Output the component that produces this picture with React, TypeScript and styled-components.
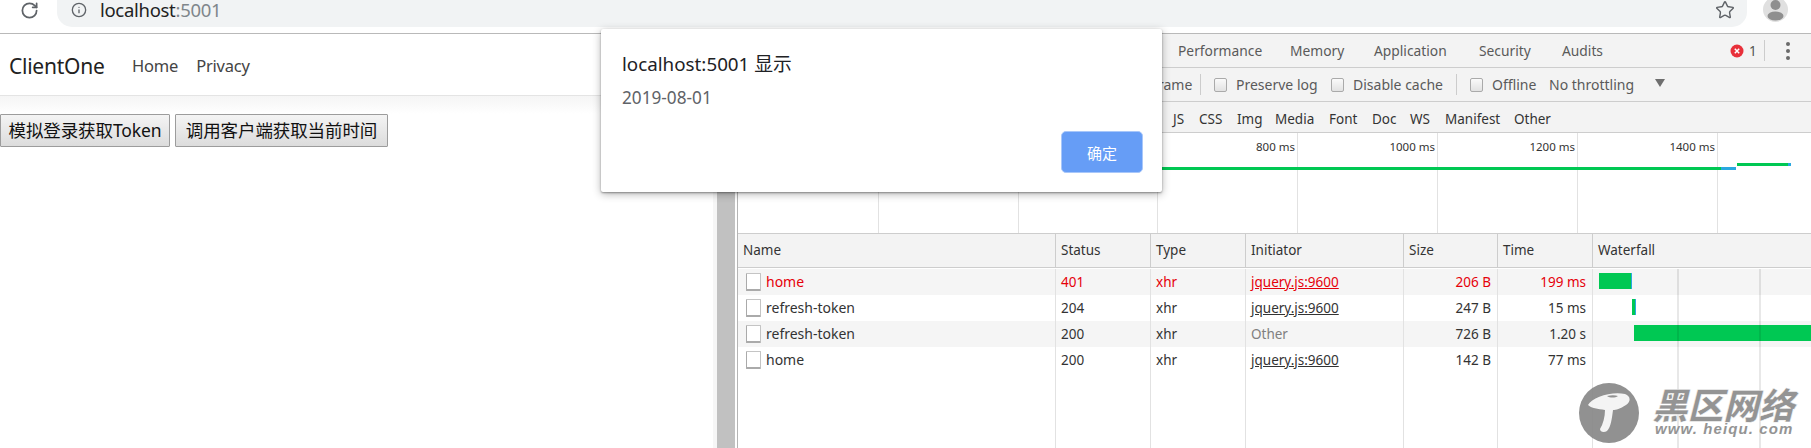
import React from "react";
import styled, { createGlobalStyle } from "styled-components";
import { RotateCw, Info, Star } from "lucide-react";

const Global = createGlobalStyle`
  html, body { margin: 0; padding: 0; background: #fff; overflow: hidden; }
  #root { width: 1811px; height: 448px; }
  * { box-sizing: border-box; }
`;
const UI = `"Noto Sans", "Noto Sans CJK SC", sans-serif`;

const Screen = styled.div`
  position: relative; width: 1811px; height: 448px; overflow: hidden; display: flex; flex-direction: column;
  font-family: ${UI}; background: #fff;
`;
const BrowserBar = styled.header`
  height: 34px; flex: none; display: flex; align-items: flex-start; border-bottom: 1px solid #b9b9b9; background: #fff;
`;
const Reload = styled.div`
  width: 57px; height: 27px; flex: none; padding: 1px 0 0 20px; color: #5f6368; display: flex;
`;
const Omnibox = styled.div`
  width: 1690px; height: 27px; flex: none; background: #f1f3f4; border-radius: 0 0 15px 15px;
  display: flex; align-items: center; padding: 0 12px 7px 14px; color: #5f6368;
`;
const Url = styled.span`
  margin-left: 13px; font-size: 18.5px; line-height: 18px; color: #222; flex: 1; letter-spacing: -0.3px;
  & > span { color: #80868b; }
`;
const Avatar = styled.div`
  margin: -3px 0 0 16px; width: 25px; height: 25px; flex: none; border-radius: 50%; background: #e0e0e0; overflow: hidden;
`;
const Main = styled.div`display: flex; flex: 1; min-height: 0;`;
const Page = styled.section`width: 713px; flex: none; display: flex; flex-direction: column; background: #fff;`;
const Navbar = styled.nav`
  height: 62px; flex: none; border-bottom: 1px solid #e4e4e4; display: flex; align-items: center; padding: 2px 0 0 9px; color: #333;
`;
const Brand = styled.span`font-size: 21px; margin-right: 27px; width: 96px; color: #222; letter-spacing: -0.25px; white-space: nowrap;`;
const NavLink = styled.span`font-size: 16.5px; margin-right: 18px; color: #444; letter-spacing: -0.2px;`;
const PageBody = styled.div`
  flex: 1; padding-top: 18px; display: flex; align-items: flex-start; gap: 5px;
  background: linear-gradient(#f5f5f5, #fff 18px);
`;
const PlainButton = styled.button<{ $w: number }>`
  width: ${p => p.$w}px; height: 33px; padding: 0; border: 1px solid #9c9c9c; border-radius: 1px; font-family: ${UI}; font-size: 17.5px; line-height: 1;
  color: #111; background: linear-gradient(#f4f4f4, #dcdcdc); white-space: nowrap; letter-spacing: -0.1px;
`;
const Scrollbar = styled.div`
  width: 24px; flex: none; border-left: 4px solid #f6f6f6; border-right: 2px solid #fff; background: #c1c1c1;
`;
const Devtools = styled.section`
  flex: 1; min-width: 0; display: flex; flex-direction: column; border-left: 1px solid #b5b5b5; font-size: 13.5px; color: #333;
`;
const ToolRow = styled.div<{ $h: number; $pad: number; $top?: number }>`
  height: ${p => p.$h}px; flex: none; background: #f3f3f3; border-bottom: 1px solid #cdcdcd;
  display: flex; align-items: center; padding: ${p => p.$top ?? 0}px 0 0 ${p => p.$pad}px; white-space: nowrap;
`;
const Tab = styled.span<{ $w: number }>`width: ${p => p.$w}px; flex: none; color: #5a5a5a; font-size: 13.8px;`;
const ErrorWrap = styled.span`
  margin-left: 126px; display: flex; align-items: center; gap: 5px; color: #555; width: 34px;
`;
const VDivider = styled.span<{ $gap?: number }>`
  width: 1px; height: 21px; background: #ccc; flex: none; margin: 0 ${p => p.$gap ?? 13}px;
`;
const Dots = styled.span`margin-left: 15px; display: flex;`;
const Check = styled.span`
  width: 13px; height: 14px; flex: none; border: 1px solid #aaa; border-radius: 2px; background: linear-gradient(#fafafa, #e2e2e2); margin-right: 9px;
`;
const OptLabel = styled.span<{ $w: number }>`width: ${p => p.$w}px; flex: none; color: #5a5a5a; font-size: 14px;`;
const HiddenLabel = styled(OptLabel)`text-align: right;`;
const DropTriangle = styled.span`
  width: 0; height: 0; border-left: 5px solid transparent; border-right: 5px solid transparent; border-top: 8px solid #6e6e6e; margin: -4px 0 0 21px;
`;
const Filter = styled.span<{ $w: number }>`width: ${p => p.$w}px; flex: none; color: #333;`;
const Timeline = styled.div`height: 101px; flex: none; background: #fff; border-bottom: 1px solid #cdcdcd;`;
const Table = styled.div`flex: 1; min-height: 0; display: flex; flex-direction: column; background: #fff;`;
const cols = "318px 95px 95px 158px 94px 95px 1fr";
const HeaderRow = styled.div`
  height: 34px; flex: none; display: grid; grid-template-columns: ${cols}; background: #f3f3f3; border-bottom: 1px solid #cdcdcd; margin-bottom: 1px;
`;
const HeaderCell = styled.div`
  display: flex; align-items: center; padding: 0 0 1px 5px; border-right: 1px solid #cdcdcd; color: #333; &:last-child { border-right: none; }
`;
const Row = styled.div<{ $alt?: boolean; $err?: boolean }>`
  height: 26px; flex: none; display: grid; grid-template-columns: ${cols};
  background: ${p => (p.$alt ? "#f5f5f5" : "#fff")}; color: ${p => (p.$err ? "#e6000a" : "#333")};
`;
const Cell = styled.div<{ $right?: boolean }>`
  display: flex; align-items: center; padding: 0 ${p => (p.$right ? 6 : 5)}px 1px; border-right: 1px solid #e2e2e2; white-space: nowrap; overflow: hidden;
  justify-content: ${p => (p.$right ? "flex-end" : "flex-start")};
`;
const NameCell = styled(Cell)`padding-left: 8px; gap: 5px; font-size: 14px;`;
const FileIcon = styled.span`
  width: 15px; height: 18px; flex: none; background: #fff; border: 1px solid #c4c4c4; border-left-color: #aaa; border-bottom: 2px solid #aaa; border-radius: 1px;
`;
const Link = styled.span`text-decoration: underline;`;
const Muted = styled.span`color: #808080;`;
const WaterfallCell = styled.div`
  position: relative; overflow: hidden; border-left: 1px solid transparent; height: 100%;
  &::before, &::after { content: ""; position: absolute; top: 0; bottom: 0; width: 2px; background: rgba(0,0,0,0.09); z-index: 1; }
  &::before { left: 83px; }
  &::after { left: 165px; }
`;
const Bar = styled.span`
  position: absolute; top: 4px; height: 16px; background: #00c853; border-right: 1px solid #29a8e0;
`;
const FillRow = styled.div`flex: 1; min-height: 0; display: grid; grid-template-columns: ${cols};`;
const Dialog = styled.div`
  position: absolute; left: 601px; top: 29px; width: 561px; height: 163px; background: #fff; border-radius: 2px; z-index: 5;
  box-shadow: 0 1px 2px rgba(0,0,0,.35), 0 2px 8px rgba(0,0,0,.3); padding: 22px 19px 19px 21px; display: flex; flex-direction: column;
`;
const DialogTitle = styled.div`font-size: 18.8px; line-height: 26px; color: #202124;`;
const DialogText = styled.div`font-size: 17.2px; line-height: 20px; margin-top: 11px; color: #5f6368; flex: 1;`;
const DialogActions = styled.div`display: flex; justify-content: flex-end;`;
const DialogButton = styled.button`
  width: 82px; height: 42px; border: 1px solid #a8c7fa; border-radius: 5px; background: #669df6; color: #fff; font-family: ${UI}; font-size: 15px;
`;
const Watermark = styled.div`
  position: absolute; left: 1579px; top: 383px; width: 225px; height: 62px; display: flex; gap: 13px; z-index: 4; opacity: .92;
`;
const WmText = styled.div`display: flex; flex-direction: column; padding-top: 2px;`;
const WmTitle = styled.div`
  font-family: "Noto Sans CJK SC", sans-serif; font-weight: 900; font-size: 36px; line-height: 37px; color: #8c8c8c; letter-spacing: -.5px;
  font-style: italic; -webkit-text-stroke: .5px #fff;
`;
const WmUrl = styled.div`
  font-family: "Liberation Sans", sans-serif; font-weight: 700; font-style: italic; font-size: 15px; line-height: 14px; color: #8c8c8c; letter-spacing: 1.1px; white-space: pre; margin-left: 3px;
`;

const rows = [
  { name: "home", status: "401", link: true, size: "206 B", time: "199 ms", err: true, alt: true, bars: [[5, 33]] },
  { name: "refresh-token", status: "204", link: true, size: "247 B", time: "15 ms", bars: [[38, 4]] },
  { name: "refresh-token", status: "200", link: false, size: "726 B", time: "1.20 s", alt: true, bars: [[40, 190]] },
  { name: "home", status: "200", link: true, size: "142 B", time: "77 ms", bars: [] as number[][] },
];
const gridX = [140, 280, 419, 559, 699, 839, 979];
const labels: [number, string][] = [[559, "800 ms"], [699, "1000 ms"], [839, "1200 ms"], [979, "1400 ms"]];

export default function App() {
  return (
    <Screen>
      <Global />
      <BrowserBar>
        <Reload><RotateCw size={19} strokeWidth={2.2} /></Reload>
        <Omnibox>
          <Info size={16} strokeWidth={2} />
          <Url>localhost<span>:5001</span></Url>
          <Star size={20} strokeWidth={1.7} />
        </Omnibox>
        <Avatar>
          <svg width="25" height="25" viewBox="0 0 25 25"><circle cx="12.5" cy="8" r="5" fill="#8f8f8f" /><ellipse cx="12.5" cy="19" rx="8" ry="4.5" fill="#8f8f8f" /></svg>
        </Avatar>
      </BrowserBar>
      <Main>
        <Page>
          <Navbar>
            <Brand>ClientOne</Brand>
            <NavLink>Home</NavLink>
            <NavLink>Privacy</NavLink>
          </Navbar>
          <PageBody>
            <PlainButton $w={170}>模拟登录获取Token</PlainButton>
            <PlainButton $w={213}>调用客户端获取当前时间</PlainButton>
          </PageBody>
        </Page>
        <Scrollbar />
        <Devtools>
          <ToolRow $h={34} $pad={440}>
            <Tab $w={112}>Performance</Tab>
            <Tab $w={84}>Memory</Tab>
            <Tab $w={105}>Application</Tab>
            <Tab $w={83}>Security</Tab>
            <Tab $w={42}>Audits</Tab>
            <ErrorWrap>
              <svg width="14" height="14" viewBox="0 0 14 14"><circle cx="7" cy="7" r="6.5" fill="#e8303a" /><path d="M4.8 4.8l4.4 4.4M9.2 4.8l-4.4 4.4" stroke="#fff" strokeWidth="1.5" /></svg>
              1
            </ErrorWrap>
            <VDivider $gap={0} />
            <Dots>
              <svg width="16" height="22" viewBox="0 0 16 22"><circle cx="8" cy="4" r="2" fill="#6a6a6a" /><circle cx="8" cy="11" r="2" fill="#6a6a6a" /><circle cx="8" cy="18" r="2" fill="#6a6a6a" /></svg>
            </Dots>
          </ToolRow>
          <ToolRow $h={34} $pad={351}>
            <HiddenLabel $w={98}>Group by frame</HiddenLabel>
            <VDivider $gap={13} />
            <Check /><OptLabel $w={95}>Preserve log</OptLabel>
            <Check /><OptLabel $w={90}>Disable cache</OptLabel>
            <VDivider $gap={13} />
            <Check /><OptLabel $w={57}>Offline</OptLabel>
            <OptLabel $w={85}>No throttling</OptLabel>
            <DropTriangle />
          </ToolRow>
          <ToolRow $h={31} $pad={435} $top={3}>
            <Filter $w={26}>JS</Filter>
            <Filter $w={38}>CSS</Filter>
            <Filter $w={38}>Img</Filter>
            <Filter $w={54}>Media</Filter>
            <Filter $w={43}>Font</Filter>
            <Filter $w={38}>Doc</Filter>
            <Filter $w={35}>WS</Filter>
            <Filter $w={69}>Manifest</Filter>
            <Filter $w={40}>Other</Filter>
          </ToolRow>
          <Timeline>
            <svg width="1073" height="100" viewBox="0 0 1073 100">
              {gridX.map(x => <rect key={x} x={x} y="0" width="1" height="100" fill="#e2e2e2" />)}
              {labels.map(([x, t]) => (
                <text key={t} x={x - 2} y="18" textAnchor="end" fontFamily="Noto Sans" fontSize="11.5" fill="#333">{t}</text>
              ))}
              <rect x="420" y="34" width="563" height="3" fill="#00c853" />
              <rect x="983" y="34" width="15" height="3" fill="#29a8e0" />
              <rect x="999" y="30" width="51" height="3" fill="#00c853" />
              <rect x="1050" y="30" width="3" height="3" fill="#29a8e0" />
            </svg>
          </Timeline>
          <Table>
            <HeaderRow>
              <HeaderCell>Name</HeaderCell>
              <HeaderCell>Status</HeaderCell>
              <HeaderCell>Type</HeaderCell>
              <HeaderCell>Initiator</HeaderCell>
              <HeaderCell>Size</HeaderCell>
              <HeaderCell>Time</HeaderCell>
              <HeaderCell>Waterfall</HeaderCell>
            </HeaderRow>
            {rows.map((r, i) => (
              <Row key={i} $alt={r.alt} $err={r.err}>
                <NameCell><FileIcon />{r.name}</NameCell>
                <Cell>{r.status}</Cell>
                <Cell>xhr</Cell>
                <Cell>{r.link ? <Link>jquery.js:9600</Link> : <Muted>Other</Muted>}</Cell>
                <Cell $right>{r.size}</Cell>
                <Cell $right>{r.time}</Cell>
                <WaterfallCell>
                  {r.bars.map((b, j) => <Bar key={j} style={{ left: b[0], width: b[1] }} />)}
                </WaterfallCell>
              </Row>
            ))}
            <FillRow>
              <Cell /><Cell /><Cell /><Cell /><Cell /><Cell /><WaterfallCell />
            </FillRow>
          </Table>
        </Devtools>
      </Main>
      <Dialog>
        <DialogTitle>localhost:5001 显示</DialogTitle>
        <DialogText>2019-08-01</DialogText>
        <DialogActions><DialogButton>确定</DialogButton></DialogActions>
      </Dialog>
      <Watermark>
        <svg width="60" height="60" viewBox="0 0 60 60">
          <circle cx="30" cy="30" r="30" fill="#888" />
          <path d="M9 22c4-8 24-14 37-11 6 2 6 8 1 11-6 4-10 5-13 5-1 8-2 17-6 21-3 2-7 1-7-2 3-5 5-12 5-19-7-1-14-2-17-5z" fill="#f4f4f4" />
          <path d="M28 13c4-1 8-1 11 0-3 2-8 2-11 0z" fill="#888" />
        </svg>
        <WmText>
          <WmTitle>黑区网络</WmTitle>
          <WmUrl>www. heiqu. com</WmUrl>
        </WmText>
      </Watermark>
    </Screen>
  );
}
